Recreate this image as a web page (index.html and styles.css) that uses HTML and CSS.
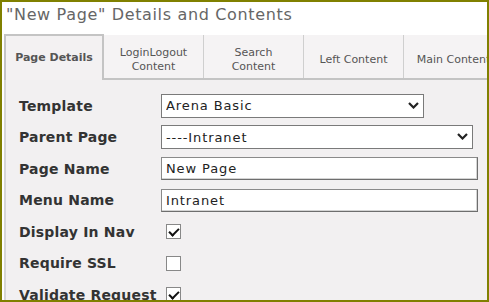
FILE: index.html
```html
<!DOCTYPE html>
<html lang="en">
<head>
    <meta charset="UTF-8">
    <title>Page Details</title>
    <link rel="stylesheet" href="styles.css">
</head>
<body>

<div class="window">
    <h1 class="title">"New Page" Details and Contents</h1>

    <!-- Zakladki -->
    <div class="tabs">
        <div class="tab active">Page Details</div>
        <div class="tab">LoginLogout<br>Content</div>
        <div class="tab">Search<br>Content</div>
        <div class="tab">Left Content</div>
        <div class="tab">Main Content</div>
    </div>

    <div class="panel">
        <form class="details">
            <label for="template">Template</label>
            <span class="select select-short">
                <select id="template"><option>Arena Basic</option></select>
                <svg class="chevron" width="11" height="7" viewBox="0 0 11 7"><path d="M1 1 L5.5 5.5 L10 1" fill="none" stroke="#222" stroke-width="2.2"/></svg>
            </span>

            <label for="parent">Parent Page</label>
            <span class="select select-long">
                <select id="parent"><option>----Intranet</option></select>
                <svg class="chevron" width="11" height="7" viewBox="0 0 11 7"><path d="M1 1 L5.5 5.5 L10 1" fill="none" stroke="#222" stroke-width="2.2"/></svg>
            </span>

            <label for="pagename">Page Name</label>
            <input type="text" id="pagename" value="New Page">

            <label for="menuname">Menu Name</label>
            <input type="text" id="menuname" value="Intranet">

            <label for="nav">Display In Nav</label>
            <input type="checkbox" id="nav" checked>

            <label for="ssl">Require SSL</label>
            <input type="checkbox" id="ssl">

            <label for="validate">Validate Request</label>
            <input type="checkbox" id="validate" checked>
        </form>
    </div>
</div>

</body>
</html>
```

FILE: styles.css
```css
/* Reset */
* {
    margin: 0;
    padding: 0;
    box-sizing: border-box;
}

body {
    font-family: "DejaVu Sans", Verdana, sans-serif;
    background-color: #fff;
    color: #333;
}

/* Okno z ramka */
.window {
    width: 489px;
    height: 302px;
    border: 2px solid #808000;
    overflow: hidden;
    display: flex;
    flex-direction: column;
}

.title {
    font-size: 16px;
    font-weight: normal;
    letter-spacing: 0.65px;
    color: #666;
    line-height: 19px;
    margin: 3px 0 10px 4px;
    white-space: nowrap;
}

/* Zakladki */
.tabs {
    display: flex;
    align-items: flex-end;
    margin-left: 2px;
    border-bottom: 2px solid #c4c4c4;
}

.tab {
    flex: 0 0 100px;
    height: 43px;
    padding-top: 6px;
    display: flex;
    align-items: center;
    justify-content: center;
    text-align: center;
    font-size: 11px;
    line-height: 14px;
    color: #555;
    background-color: #f5f3f4;
    border-right: 1px solid #cfcfcf;
    white-space: nowrap;
}

.tab.active {
    height: 46px;
    padding-top: 0;
    margin-bottom: -2px;
    font-weight: bold;
    background-color: #f3f1f2;
    border: 2px solid #c4c4c4;
    border-bottom: none;
}

/* Panel z formularzem */
.panel {
    flex: 1;
    margin-left: 2px;
    background-color: #f2f0f1;
    border-left: 2px solid #d6d6d6;
}

.details {
    display: grid;
    grid-template-columns: 142px 1fr;
    grid-auto-rows: 31.5px;
    align-items: center;
    padding: 10px 0 0 13px;
}

.details label {
    font-size: 14px;
    font-weight: bold;
    letter-spacing: 0.2px;
    color: #333;
    white-space: nowrap;
}

.details input[type="text"],
.details select {
    font-family: "DejaVu Sans", Verdana, sans-serif;
    font-size: 13px;
    letter-spacing: 0.9px;
    color: #222;
    background-color: #fff;
    border: 1px solid #7a7a7a;
    padding: 0 4px;
}

.details input[type="text"] {
    width: 317px;
    height: 23px;
    border-color: #8a8a8a #6e6e6e #6e6e6e #8a8a8a;
    box-shadow: inset -1px -1px 0 #d4d4d4;
}

/* Lista rozwijana */
.select {
    position: relative;
    display: block;
}

.select select {
    appearance: none;
    -webkit-appearance: none;
    width: 100%;
    height: 24px;
    outline: none;
}

.select-short {
    width: 263px;
}

.select-long {
    width: 312px;
}

.chevron {
    position: absolute;
    right: 5px;
    top: 8px;
}

/* Pola wyboru */
.details input[type="checkbox"] {
    appearance: none;
    -webkit-appearance: none;
    width: 15px;
    height: 15px;
    margin-left: 5px;
    background-color: #fff;
    border: 1px solid #888;
    display: flex;
    justify-content: center;
}

.details input[type="checkbox"]:checked::after {
    content: '';
    width: 4px;
    height: 8px;
    margin-top: 1px;
    border: solid #111;
    border-width: 0 2px 2px 0;
    transform: rotate(45deg);
}
```
